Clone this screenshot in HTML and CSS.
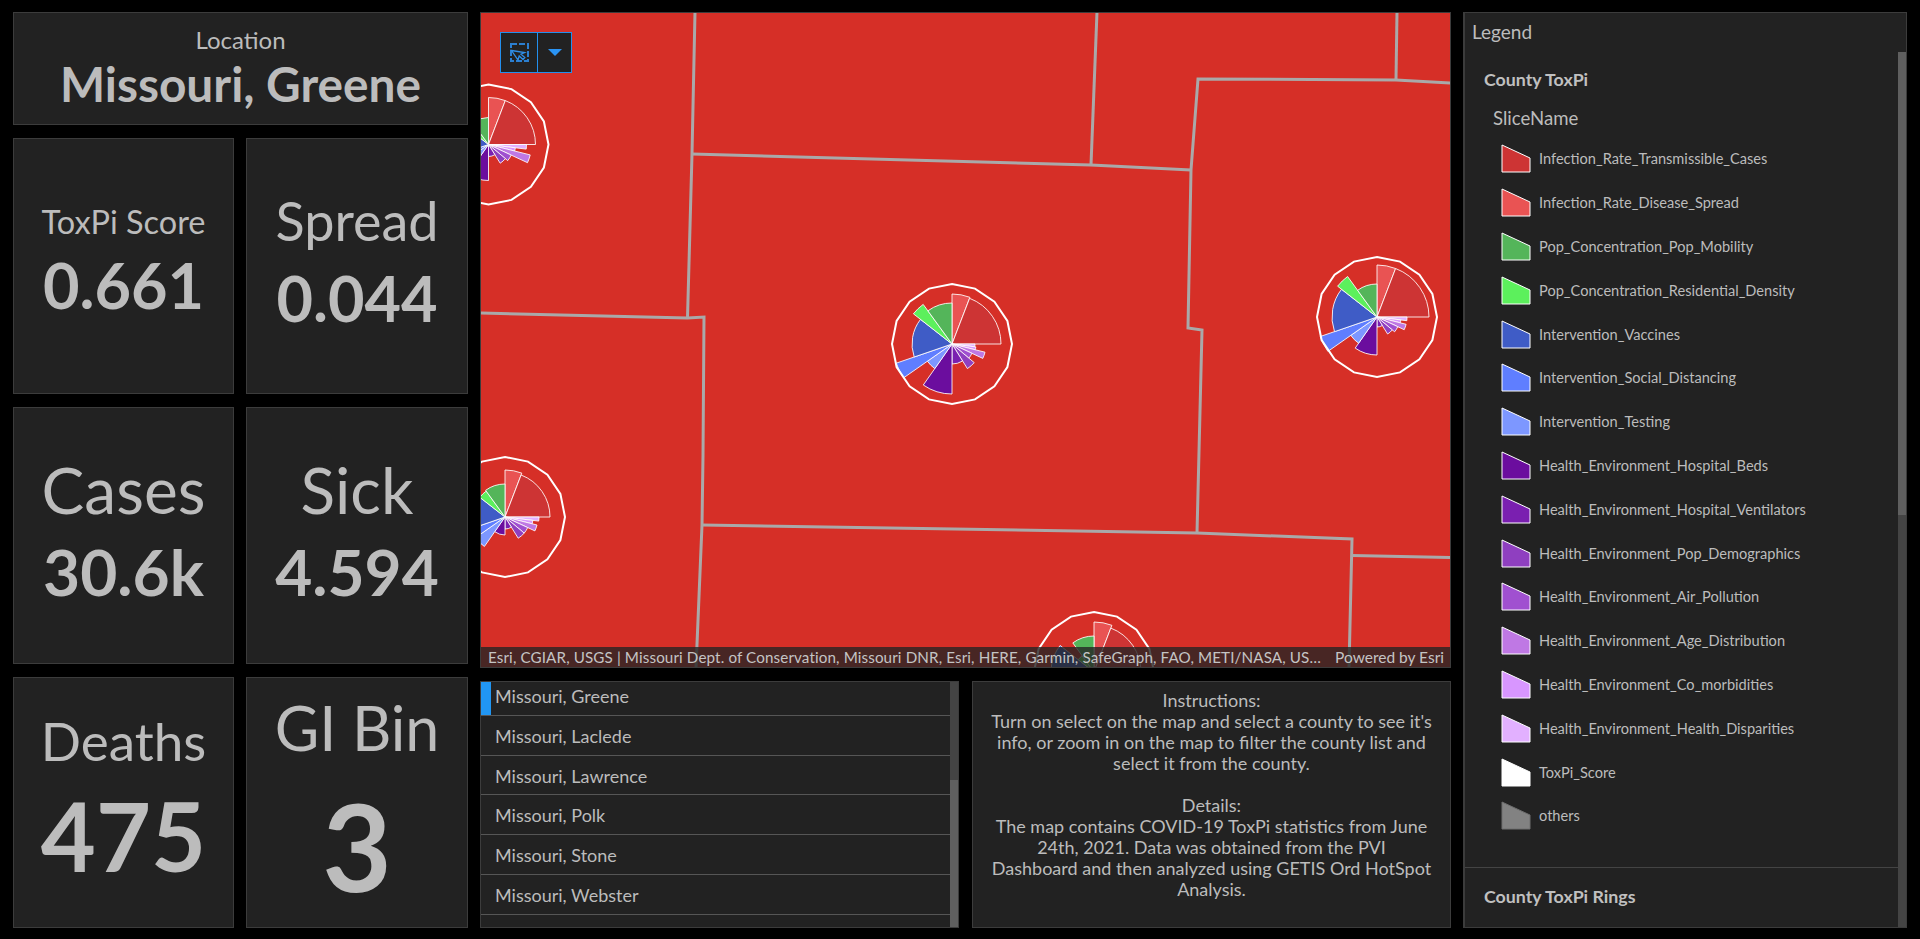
FILE: index.html
```html
<!DOCTYPE html>
<html lang="en">
<head>
<meta charset="utf-8">
<title>Missouri ToxPi Dashboard</title>
<link rel="stylesheet" href="styles.css">
</head>
<body>
<div class="dash">
  <section class="stats">
    <div class="card wide"><div class="loc-label">Location</div><div class="loc-value">Missouri, Greene</div></div>
    <div class="card"><div class="lbl lbl-tox">ToxPi Score</div><div class="num num-tox">0.661</div></div>
    <div class="card"><div class="lbl lbl-spread">Spread</div><div class="num num-spread">0.044</div></div>
    <div class="card"><div class="lbl lbl-cases">Cases</div><div class="num num-cases">30.6k</div></div>
    <div class="card"><div class="lbl lbl-sick">Sick</div><div class="num num-sick">4.594</div></div>
    <div class="card"><div class="lbl lbl-deaths">Deaths</div><div class="num num-deaths">475</div></div>
    <div class="card"><div class="lbl lbl-gi">GI Bin</div><div class="num num-gi">3</div></div>
  </section>

  <section class="center">
    <div class="map">
      <svg class="map-svg" viewBox="481 13 969 654" preserveAspectRatio="none" aria-hidden="true">
        <rect x="481" y="13" width="969" height="654" class="land"/>
        <g class="lines">
          <polyline points="695,12 692,154 687.5,318"/>
          <polyline points="1097,12 1091,165"/>
          <polyline points="692,154 1091,165 1191,170"/>
          <polyline points="1191,170 1198,79 1396,80 1451,83"/>
          <polyline points="1397,12 1396,80"/>
          <polyline points="1191,170 1188,328 1202,330 1197,533"/>
          <polyline points="480,313 687.5,318 704,317 703,456 702,525 696,668"/>
          <polyline points="702,525 1197,533 1352,539 1349,668"/>
          <polyline points="1352,555.5 1451,557.5"/>
        </g>
        <g id="pies"></g>
      </svg>
      <div class="tool">
        <button class="tool-btn tool-main" type="button" aria-label="Select">
          <svg class="tool-icon" viewBox="0 0 19 19">
            <rect x="1" y="1" width="17" height="17" class="sel-box"/>
            <path d="M1.5 7.5 L8 17 L9.2 13 L13 16.5 L14.8 14.5 L11 11.2 L14.6 9.6 Z" class="sel-arrow"/>
          </svg>
        </button>
        <button class="tool-btn tool-drop" type="button" aria-label="Select options"><span class="caret"></span></button>
      </div>
      <div class="attr">
        <span class="attr-src">Esri, CGIAR, USGS | Missouri Dept. of Conservation, Missouri DNR, Esri, HERE, Garmin, SafeGraph, FAO, METI/NASA, US…</span>
        <span class="attr-pow">Powered by Esri</span>
      </div>
    </div>

    <div class="lower">
      <div class="panel list">
        <div class="list-clip">
          <div class="rows">
            <div class="row selected">Missouri, Greene</div>
            <div class="row">Missouri, Laclede</div>
            <div class="row">Missouri, Lawrence</div>
            <div class="row">Missouri, Polk</div>
            <div class="row">Missouri, Stone</div>
            <div class="row">Missouri, Webster</div>
            <div class="row"></div>
          </div>
        </div>
        <div class="sb sb-list"><div class="sb-thumb"></div></div>
      </div>
      <div class="panel info">
        <p>Instructions:<br>Turn on select on the map and select a county to see it's<br>info, or zoom in on the map to filter the county list and<br>select it from the county.</p>
        <p class="info-gap">Details:<br>The map contains COVID-19 ToxPi statistics from June<br>24th, 2021. Data was obtained from the PVI<br>Dashboard and then analyzed using GETIS Ord HotSpot<br>Analysis.</p>
      </div>
    </div>
  </section>

  <aside class="panel legend">
    <div class="legend-title">Legend</div>
    <div class="legend-body">
      <div class="legend-content">
        <h2 class="layer">County ToxPi</h2>
        <div class="field">SliceName</div>
        <ul class="items">
          <li class="item"><svg class="sw" viewBox="0 0 30 29"><polygon class="s1" points="1,1 29,14 29,28 1,28"/></svg>Infection_Rate_Transmissible_Cases</li>
          <li class="item"><svg class="sw" viewBox="0 0 30 29"><polygon class="s2" points="1,1 29,14 29,28 1,28"/></svg>Infection_Rate_Disease_Spread</li>
          <li class="item"><svg class="sw" viewBox="0 0 30 29"><polygon class="s3" points="1,1 29,14 29,28 1,28"/></svg>Pop_Concentration_Pop_Mobility</li>
          <li class="item"><svg class="sw" viewBox="0 0 30 29"><polygon class="s4" points="1,1 29,14 29,28 1,28"/></svg>Pop_Concentration_Residential_Density</li>
          <li class="item"><svg class="sw" viewBox="0 0 30 29"><polygon class="s5" points="1,1 29,14 29,28 1,28"/></svg>Intervention_Vaccines</li>
          <li class="item"><svg class="sw" viewBox="0 0 30 29"><polygon class="s6" points="1,1 29,14 29,28 1,28"/></svg>Intervention_Social_Distancing</li>
          <li class="item"><svg class="sw" viewBox="0 0 30 29"><polygon class="s7" points="1,1 29,14 29,28 1,28"/></svg>Intervention_Testing</li>
          <li class="item"><svg class="sw" viewBox="0 0 30 29"><polygon class="s8" points="1,1 29,14 29,28 1,28"/></svg>Health_Environment_Hospital_Beds</li>
          <li class="item"><svg class="sw" viewBox="0 0 30 29"><polygon class="s9" points="1,1 29,14 29,28 1,28"/></svg>Health_Environment_Hospital_Ventilators</li>
          <li class="item"><svg class="sw" viewBox="0 0 30 29"><polygon class="s10" points="1,1 29,14 29,28 1,28"/></svg>Health_Environment_Pop_Demographics</li>
          <li class="item"><svg class="sw" viewBox="0 0 30 29"><polygon class="s11" points="1,1 29,14 29,28 1,28"/></svg>Health_Environment_Air_Pollution</li>
          <li class="item"><svg class="sw" viewBox="0 0 30 29"><polygon class="s12" points="1,1 29,14 29,28 1,28"/></svg>Health_Environment_Age_Distribution</li>
          <li class="item"><svg class="sw" viewBox="0 0 30 29"><polygon class="s13" points="1,1 29,14 29,28 1,28"/></svg>Health_Environment_Co_morbidities</li>
          <li class="item"><svg class="sw" viewBox="0 0 30 29"><polygon class="s14" points="1,1 29,14 29,28 1,28"/></svg>Health_Environment_Health_Disparities</li>
          <li class="item"><svg class="sw" viewBox="0 0 30 29"><polygon class="s15" points="1,1 29,14 29,28 1,28"/></svg>ToxPi_Score</li>
          <li class="item"><svg class="sw" viewBox="0 0 30 29"><polygon class="s16" points="1,1 29,14 29,28 1,28"/></svg>others</li>
        </ul>
        <div class="legend-rule"></div>
        <h2 class="layer layer-rings">County ToxPi Rings</h2>
      </div>
      <div class="sb sb-legend"><div class="sb-thumb"></div></div>
    </div>
  </aside>
</div>
<script src="pies.js"></script>
</body>
</html>
```
FILE: styles.css
```css
* { box-sizing: border-box; }
html, body { margin: 0; height: 939px; overflow: hidden; background: #000; }
body { font-family: "Lato", "Open Sans", sans-serif; color: #bcbcbc; }

.dash {
  display: grid;
  grid-template-columns: 455px 971px 444px;
  column-gap: 12px;
  padding: 12px 13px 0;
  height: 928px;
}

.stats {
  display: grid;
  grid-template-columns: 221px 222px;
  grid-template-rows: 113px 256px 257px 251px;
  gap: 13px 12px;
}

.card, .panel { background: #222; border: 1px solid #3c3c3c; }
.card {
  display: flex;
  flex-direction: column;
  align-items: center;
  justify-content: center;
  white-space: nowrap;
}
.wide { grid-column: 1 / 3; }

.loc-label { font-size: 24px; line-height: 30px; }
.loc-value { font-size: 47.8px; line-height: 58px; font-weight: 700; }

.lbl, .num { color: #bcbcbc; }
.num { font-weight: 700; }
.lbl-tox { font-size: 32.5px; line-height: 37px; }
.num-tox { font-size: 63px; line-height: 90px; }
.lbl-spread { font-size: 54px; line-height: 64px; }
.num-spread { font-size: 63px; line-height: 90px; }
.lbl-cases { font-size: 64px; line-height: 73px; }
.num-cases { font-size: 64px; line-height: 92px; }
.lbl-sick { font-size: 64px; line-height: 73px; }
.num-sick { font-size: 64px; line-height: 92px; }
.lbl-deaths { font-size: 53px; line-height: 65px; }
.num-deaths { font-size: 95px; line-height: 124px; }
.lbl-gi { font-size: 61px; line-height: 86px; }
.num-gi { font-size: 120px; line-height: 150px; }

.center { display: flex; flex-direction: column; gap: 13px; }

.map {
  position: relative;
  height: 656px;
  border: 1px solid #3c3c3c;
  overflow: hidden;
}
.map-svg { display: block; width: 100%; height: 100%; }
.land { fill: #d62f27; }
.lines polyline { fill: none; stroke: #a9a9a9; stroke-width: 3; }
.ring { fill: none; stroke: #fff; stroke-width: 2; }
.slice { stroke: #fff; stroke-opacity: .85; stroke-width: 1; }

.tool {
  position: absolute;
  left: 19px;
  top: 19px;
  display: flex;
  width: 72px;
  height: 41px;
  background: #222;
  border: 1px solid #2390ee;
}
.tool-btn {
  display: flex;
  align-items: center;
  justify-content: center;
  padding: 0;
  background: transparent;
  border: 0;
}
.tool-main { width: 37px; border-right: 1px solid #2390ee; }
.tool-drop { flex: 1; }
.tool-icon { width: 19px; height: 19px; }
.sel-box { fill: none; stroke: #2b7fd0; stroke-width: 2; stroke-dasharray: 6 2; }
.sel-arrow { fill: #222; stroke: #2f8fe8; stroke-width: 1.3; }
.caret {
  width: 0;
  height: 0;
  border-left: 7px solid transparent;
  border-right: 7px solid transparent;
  border-top: 7px solid #2a94f4;
}

.attr {
  position: absolute;
  left: 0;
  right: 0;
  bottom: 0;
  height: 20px;
  display: flex;
  justify-content: space-between;
  align-items: center;
  padding: 0 6px 0 7px;
  background: rgba(36, 36, 36, .8);
  font-size: 15.2px;
  letter-spacing: .12px;
  color: #c4c4c4;
  white-space: nowrap;
}
.attr-pow { font-size: 15.5px; letter-spacing: 0; }

.lower {
  display: grid;
  grid-template-columns: 479px 479px;
  column-gap: 13px;
  height: 247px;
}

.list { display: flex; overflow: hidden; }
.list-clip { flex: 1; overflow: hidden; }
.rows { margin-top: -6px; }
.row {
  height: 39.8px;
  line-height: 40px;
  padding-left: 14px;
  border-bottom: 1px solid #565656;
  font-size: 18px;
  position: relative;
}
.selected::before {
  content: "";
  position: absolute;
  left: 0;
  top: 0;
  bottom: 0;
  width: 10px;
  background: #2196f3;
}
.sb { flex: none; display: flex; flex-direction: column; width: 8px; background: #444; }
.sb-thumb { background: #5f5f5f; }
.sb-list { justify-content: flex-end; }
.sb-list .sb-thumb { height: 147px; }
.sb-legend .sb-thumb { height: 463px; }

.info {
  padding-top: 8px;
  text-align: center;
  font-size: 18px;
  line-height: 21px;
}
.info p { margin: 0; }
.info .info-gap { margin-top: 21px; }

.legend {
  display: flex;
  flex-direction: column;
  border-left-width: 2px;
  overflow: hidden;
}
.legend-title { flex: none; height: 39px; padding: 8px 0 0 7px; font-size: 19px; line-height: 21px; }
.legend-body { flex: 1; display: flex; min-height: 0; }
.legend-content { flex: 1; min-width: 0; }
.layer { margin: 0; padding-left: 19px; font-size: 17.8px; line-height: 22px; font-weight: 700; color: #c0c0c0; padding-top: 16px; }
.field { padding: 16px 0 0 28px; font-size: 18.6px; line-height: 24px; }
.items { list-style: none; margin: 7px 0 0; padding: 0 0 0 36px; }
.item {
  display: flex;
  align-items: center;
  height: 43.8px;
  font-size: 14.6px;
}
.sw { flex: none; width: 30px; height: 29px; margin-right: 8px; }
.sw polygon { stroke: #fff; stroke-width: 1; }
.s1 { fill: #cd3434; } .s2 { fill: #e95353; } .s3 { fill: #54b55a; } .s4 { fill: #5cf05c; }
.s5 { fill: #3f5cc6; } .s6 { fill: #5f7eff; } .s7 { fill: #7d97ff; } .s8 { fill: #6b0d9e; }
.s9 { fill: #7a1fb0; } .s10 { fill: #8f3fc0; } .s11 { fill: #a050d0; } .s12 { fill: #bf78e4; }
.s13 { fill: #d896ff; } .s14 { fill: #e2b0ff; } .s15 { fill: #fff; }
.sw polygon.s16 { fill: #828282; stroke: #6e6e6e; }
.legend-rule { height: 1px; margin-top: 29px; background: #444; }
.layer-rings { padding-top: 17px; }
```
FILE: pies.js
```js
// Slices run clockwise from north; each value is that slice's radius in px.
var ANGLES = [0, 21, 90, 97, 104, 115, 130, 148, 180, 215, 235, 251, 308, 324, 360];
var CLASSES = ["s2", "s1", "s14", "s13", "s12", "s11", "s10", "s9", "s8", "s7", "s6", "s5", "s4", "s3"];
var PIES = [
  { x: 952, y: 344, r: [50, 49, 23, 24, 34, 22, 29, 20, 50, 30, 59, 40, 49, 41] },
  { x: 1377, y: 317, r: [52, 52, 30, 24, 30, 23, 20, 10, 38, 32, 60, 45, 50, 33] },
  { x: 488.5, y: 144.5, r: [47, 47, 38, 27, 43, 25, 22, 12, 36, 25, 40, 30, 45, 27] },
  { x: 505, y: 517, r: [47, 45, 34, 28, 33, 25, 25, 12, 18, 36, 45, 35, 32, 33] },
  { x: 1094, y: 672, r: [50, 47, 25, 25, 25, 25, 25, 25, 25, 25, 25, 43, 20, 36] }
];
var NS = "http://www.w3.org/2000/svg";
var host = document.getElementById("pies");

function pt(cx, cy, r, deg) {
  var a = deg * Math.PI / 180;
  return (cx + r * Math.sin(a)).toFixed(1) + " " + (cy - r * Math.cos(a)).toFixed(1);
}

PIES.forEach(function (p) {
  p.r.forEach(function (r, i) {
    var s = document.createElementNS(NS, "path");
    s.setAttribute("d", "M" + p.x + " " + p.y + " L" + pt(p.x, p.y, r, ANGLES[i]) +
      " A" + r + " " + r + " 0 0 1 " + pt(p.x, p.y, r, ANGLES[i + 1]) + " Z");
    s.setAttribute("class", "slice " + CLASSES[i]);
    host.appendChild(s);
  });
  var ring = document.createElementNS(NS, "polygon");
  var pts = [];
  for (var d = 0; d < 360; d += 22.5) pts.push(pt(p.x, p.y, 60, d));
  ring.setAttribute("points", pts.join(" "));
  ring.setAttribute("class", "ring");
  host.appendChild(ring);
});
```
